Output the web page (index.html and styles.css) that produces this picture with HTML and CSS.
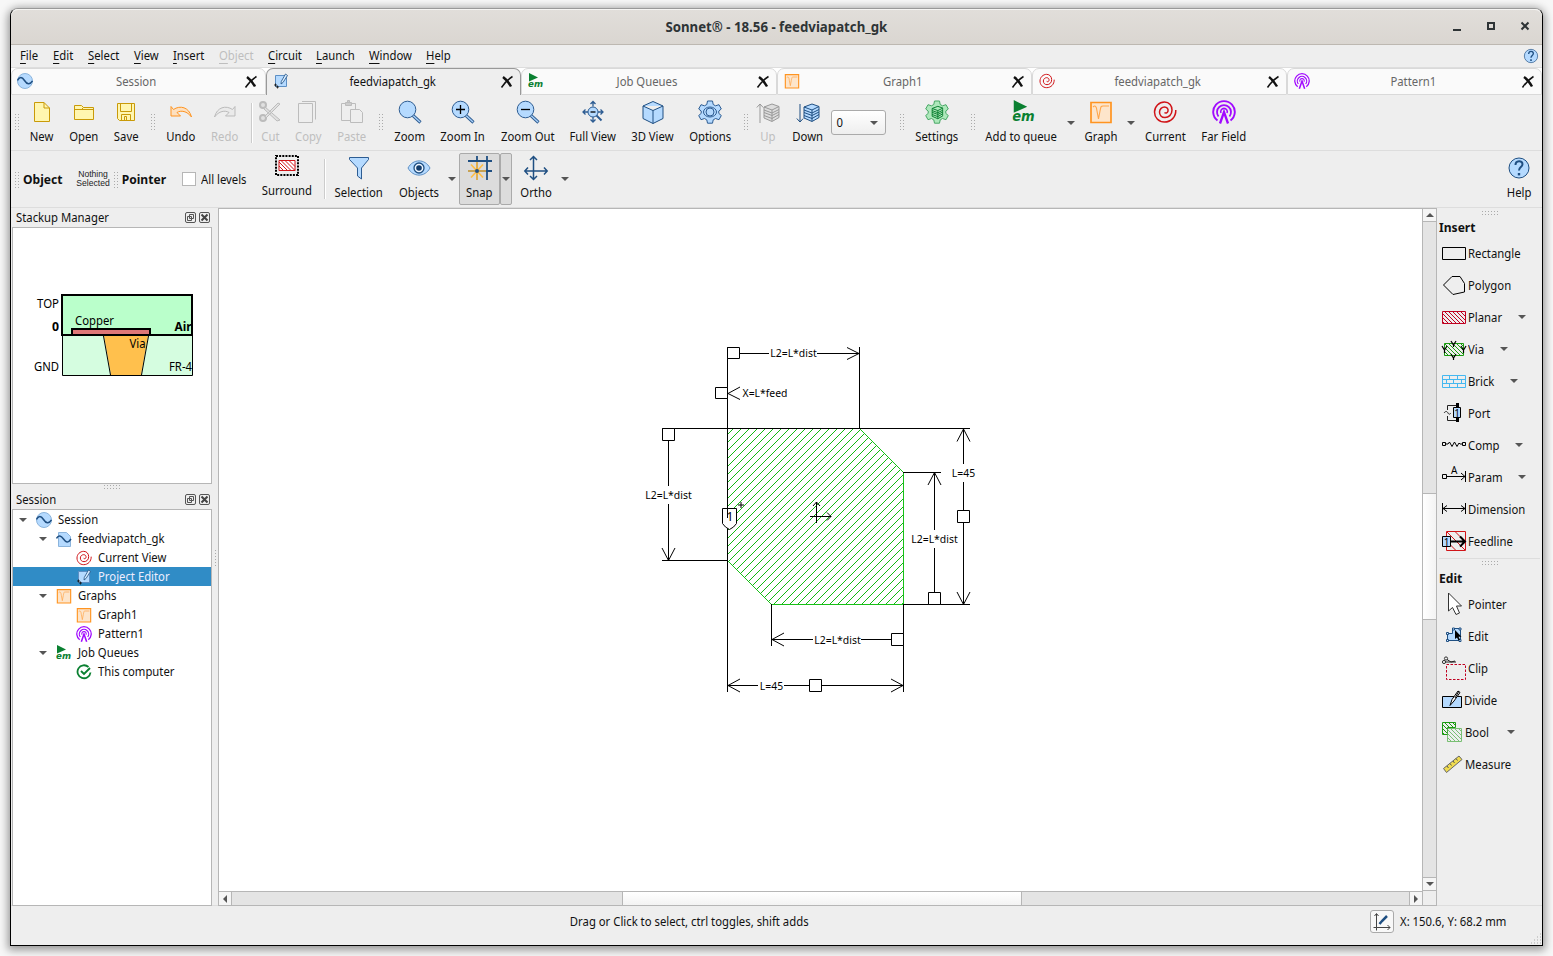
FILE: index.html
```html
<!DOCTYPE html>
<html lang="en">
<head>
<meta charset="utf-8">
<title>Sonnet</title>
<link rel="stylesheet" href="styles.css">
</head>
<body>
<svg class="defs" width="0" height="0">
  <defs>
    <pattern id="hatch" width="8" height="8" patternUnits="userSpaceOnUse"><path d="M1 0h1v1h-1zM0 1h1v1h-1zM7 2h1v1h-1zM6 3h1v1h-1zM5 4h1v1h-1zM4 5h1v1h-1zM3 6h1v1h-1zM2 7h1v1h-1z" fill="#12b812"/></pattern>
    <pattern id="redhatch" width="4" height="4" patternUnits="userSpaceOnUse"><path d="M0 0h1v1h-1zM1 1h1v1h-1zM2 2h1v1h-1zM3 3h1v1h-1z" fill="#c00020"/></pattern>
    <pattern id="greenhatch" width="4" height="4" patternUnits="userSpaceOnUse"><path d="M0 0h1v1h-1zM1 1h1v1h-1zM2 2h1v1h-1zM3 3h1v1h-1z" fill="#1a9a10"/></pattern>
    <symbol id="wave" viewBox="0 0 16 16"><circle cx="8" cy="8" r="7.500" fill="#b5daff" stroke="#8bb4dc"/><path d="M.5 7.500C2.500 3.500 5 3.500 7.500 7.500S13 12 15.500 8" fill="none" stroke="#1f4f82" stroke-width="1.500"/></symbol>
    <symbol id="wavefile" viewBox="0 0 16 16"><path d="M2.500 1.500h8l4 4v10h-12z" fill="#b5daff" stroke="#8bb4dc"/><path d="M.5 7.500C2.500 3.500 5 4.500 7.500 8S12 12.500 15 8" fill="none" stroke="#1f4f82" stroke-width="1.500"/></symbol>
    <symbol id="editor" viewBox="0 0 16 16"><path d="M2.500 2.500h11v11h-11z" fill="#b5daff" stroke="#5d8fc4"/><path d="M12.500 1l2 1.500-4.500 7-2 1.500.3-2.600z" fill="#d8ecff" stroke="#1f4f82" stroke-width=".8"/><path d="M1 12h3M2.500 10.500v3M3 14h3M4.500 12.500v3" stroke="#111" stroke-width=".8"/></symbol>
    <symbol id="em" viewBox="0 0 16 16"><path d="M1 0l9 4.500-9 4z" fill="#0a8031"/><text x="0" y="14" class="em-text" textLength="15" lengthAdjust="spacingAndGlyphs">em</text></symbol>
    <symbol id="graph" viewBox="0 0 24 24"><path d="M2 2.500h20v20H2z" fill="#fde5cb" stroke="#ff9420" stroke-width="1.700"/><path d="M4 7c2-2 3.500-1 4 4l1.500 8L11 11c1-5 1-5 3-5h6" fill="none" stroke="#ffa64a" stroke-width="1.100"/></symbol>
    <symbol id="spiral" viewBox="0 0 24 24"><path d="M22.800 10C23 17 18 22 11.500 22 5.500 22 1.500 17.500 1.500 12S6 2 11.500 2c5 0 7.500 4 7.500 8 0 5-3.500 7.500-7 7.500-3.500 0-5.500-2.500-5.500-5.500S9 7 11.500 7c2.500 0 4 2 3.500 4.200-.5 2-2.500 2.300-3.500 1.300" fill="none" stroke="#d01418" stroke-width="1.500"/></symbol>
    <symbol id="pattern" viewBox="0 0 24 24"><g fill="none" stroke="#a10aff"><path d="M5.500 20.500A10.800 10.800 0 1 1 18.500 20.500" stroke-width="1.900"/><path d="M6.500 16.500A7 7 0 1 1 17.500 16.500" stroke-width="1.800"/><path d="M9 13a3.300 3.300 0 1 1 6 0" stroke-width="1.600"/><path d="M8 23.500L12 12l4 11.500" stroke-width="2.300"/></g></symbol>
    <symbol id="check" viewBox="0 0 16 16"><path d="M12.500 3A6.500 6.500 0 1 0 14.500 8.500" fill="none" stroke="#0a8031" stroke-width="1.800"/><path d="M5 7l3 3 6-6" fill="none" stroke="#0a8031" stroke-width="1.900"/></symbol>
    <symbol id="close" viewBox="0 0 14 14"><path d="M3 2c3.500 2.500 6 6 8 9.500" stroke="#111" stroke-width="2.500" fill="none"/><path d="M12.500 1.500C8.500 4 4.500 8 1.500 12.500" stroke="#111" stroke-width="1.500" fill="none"/></symbol>
    <symbol id="help" viewBox="0 0 24 24"><circle cx="12" cy="12" r="10" fill="#b5daff" stroke="#1f4f82"/><path d="M8.500 9c0-5 7-5 7-.8 0 3-3.500 2.800-3.500 6.300" fill="none" stroke="#1f4f82" stroke-width="2"/><path d="M10.800 17h2.400v2.400h-2.400z" fill="#1f4f82"/></symbol>
    <symbol id="lens" viewBox="0 0 24 24"><path d="M15 15.500l7.500 7" stroke="#2d5c92" stroke-width="3.200"/><path d="M15 15.500l7 6.500" stroke="#a9d0f8" stroke-width="1.400"/><circle cx="9.500" cy="9.500" r="8.300" fill="#b5daff" stroke="#2d5c92"/></symbol>
    <symbol id="layers" viewBox="0 0 24 24"><path d="M8 7l8-3 7 2.500v11l-7 4-8-3.500z"/><path d="M8 7l8 3 7-3.500M16 10v11M8 10l8 3 7-3.500M8 12.500l8 3 7-3.500M8 15.500l8 3 7-4" fill="none"/></symbol>
    <symbol id="arrow" viewBox="0 0 8 4"><path d="M0 0h8L4 4z" fill="#555"/></symbol>
    <symbol id="gear" viewBox="0 0 24 24"><path d="M9.500 1h5l.7 3.500 2.300 1.300L21 4.700 23.300 9l-2.500 2v2.400l2.500 2.100-2.300 4.200-3.500-1.200-2.300 1.400-.7 3.300h-5l-.7-3.300-2.300-1.400L3 19.700.7 15.500l2.500-2.100V11L.7 9 3 4.700l3.500 1.100 2.300-1.300z"/></symbol>
    <symbol id="float" viewBox="0 0 11 11"><rect x=".5" y=".5" width="10" height="10" rx="1.500" fill="none" stroke="#555"/><path d="M4.500 2.500h4v4h-4zM2.500 4.500h4v4h-4z" fill="#eee" stroke="#555"/></symbol>
    <symbol id="shut" viewBox="0 0 11 11"><rect x=".5" y=".5" width="10" height="10" rx="1.500" fill="none" stroke="#555"/><path d="M2.500 2.500l6 6M8.500 2.500l-6 6" stroke="#444" stroke-width="2"/></symbol>
  </defs>
</svg>
<div class="window">
  <header class="titlebar">
    <span></span><h1><span class="t">Sonnet® - 18.56 - feedviapatch_gk</span></h1>
    <svg class="winbuttons" width="80" height="16" viewBox="0 0 80 16"><path d="M4 11h8" stroke="#2e3436" stroke-width="2"/><path d="M39 4h6v6h-6z" fill="none" stroke="#2e3436" stroke-width="2"/><path d="M72.500 3.500l7 7M79.500 3.500l-7 7" stroke="#2e3436" stroke-width="2"/></svg>
  </header>
  <nav class="menubar">
    <span class="t"><u>F</u>ile</span><span class="t"><u>E</u>dit</span><span class="t"><u>S</u>elect</span><span class="t"><u>V</u>iew</span><span class="t"><u>I</u>nsert</span><span class="t off"><u>O</u>bject</span><span class="t"><u>C</u>ircuit</span><span class="t"><u>L</u>aunch</span><span class="t"><u>W</u>indow</span><span class="t"><u>H</u>elp</span>
    <svg width="16" height="16"><use href="#help"/></svg>
  </nav>
  <div class="tabs">
    <div class="tab"><svg width="16" height="16"><use href="#wave"/></svg><span class="t">Session</span><svg width="14" height="14"><use href="#close"/></svg></div>
    <div class="tab active"><svg width="16" height="16"><use href="#editor"/></svg><span class="t">feedviapatch_gk</span><svg width="14" height="14"><use href="#close"/></svg></div>
    <div class="tab"><svg width="16" height="16"><use href="#em"/></svg><span class="t">Job Queues</span><svg width="14" height="14"><use href="#close"/></svg></div>
    <div class="tab"><svg width="16" height="16"><use href="#graph"/></svg><span class="t">Graph1</span><svg width="14" height="14"><use href="#close"/></svg></div>
    <div class="tab"><svg width="16" height="16"><use href="#spiral"/></svg><span class="t">feedviapatch_gk</span><svg width="14" height="14"><use href="#close"/></svg></div>
    <div class="tab"><svg width="16" height="16"><use href="#pattern"/></svg><span class="t">Pattern1</span><svg width="14" height="14"><use href="#close"/></svg></div>
  </div>
  <div class="toolbar main">
    <i class="grip"></i>
    <div class="tool"><svg viewBox="0 0 24 24"><path d="M4.500 2.500H14l5.500 5.500v13.500h-15z" fill="#fff6b0" stroke="#c99a08"/><path d="M14 2.500V8h5.500" fill="none" stroke="#c99a08"/></svg><span class="t">New</span></div>
    <div class="tool"><svg viewBox="0 0 24 24"><path d="M2.500 19.500v-14h7l2 2h10v12z" fill="#fff6b0" stroke="#c99a08"/><path d="M2.500 9.500h7l2-2" fill="none" stroke="#c99a08"/><path d="M9 9.500h12.500" stroke="#c99a08"/></svg><span class="t">Open</span></div>
    <div class="tool"><svg viewBox="0 0 24 24"><path d="M3.500 3.500h17v17h-15l-2-2z" fill="#fff6b0" stroke="#c99a08"/><path d="M6.500 3.500v8h11v-8M7.500 20.500v-6h9v6M10.500 20.500v-4h2v4" fill="none" stroke="#c99a08"/></svg><span class="t">Save</span></div>
    <i class="grip"></i>
    <div class="tool"><svg viewBox="0 0 24 24"><path d="M2 6.500l2.500 3C11 5 20 7 22.500 17 18 11 12 10 8 12.500l3.500 3.500H2z" fill="#fde0c0" stroke="#ff9420"/></svg><span class="t">Undo</span></div>
    <div class="tool off"><svg viewBox="0 0 24 24"><path d="M22 6.500l-2.500 3C13 5 4 7 1.500 17 6 11 12 10 16 12.500L12.500 16H22z" fill="#eaeaea" stroke="#bbb"/></svg><span class="t">Redo</span></div>
    <i class="sep"></i>
    <div class="tool off"><svg viewBox="0 0 24 24" fill="#e0e0e0" stroke="#bcbcbc"><circle cx="5" cy="5" r="3" stroke-width="2"/><circle cx="5" cy="18" r="3" stroke-width="2"/><path d="M7 7l15 13-3 1L6 9zM7 16L20 3l2 1L8 18z"/></svg><span class="t">Cut</span></div>
    <div class="tool off"><svg viewBox="0 0 24 24" fill="none" stroke="#bcbcbc"><path d="M2.500 3.500h14v19h-14z"/><path d="M6 1.500h13.500v18"/></svg><span class="t">Copy</span></div>
    <div class="tool off"><svg viewBox="0 0 24 24" fill="#eee" stroke="#bcbcbc"><path d="M1.500 3.500h14v17h-14z"/><path d="M5.500 2.500h6v3h-6zM7.500.5h2v2h-2z" fill="#ccc"/><path d="M10.500 9.500h9l3 3v10h-12z"/></svg><span class="t">Paste</span></div>
    <i class="grip"></i>
    <div class="tool"><svg viewBox="0 0 24 24"><use href="#lens"/></svg><span class="t">Zoom</span></div>
    <div class="tool"><svg viewBox="0 0 24 24"><use href="#lens"/><path d="M5 9.500h9M9.500 5v9" stroke="#000" stroke-width="1.300"/></svg><span class="t">Zoom In</span></div>
    <div class="tool"><svg viewBox="0 0 24 24"><use href="#lens"/><path d="M5 9.500h9" stroke="#000" stroke-width="1.300"/></svg><span class="t">Zoom Out</span></div>
    <div class="tool"><svg viewBox="0 0 24 24"><g fill="none" stroke="#2d5c92" stroke-width="1.300"><path d="M12 1.500v5M12 17v5M2 12h5M17 12h5M9.500 4L12 1.500 14.500 4M9.500 19.500L12 22l2.500-2.500M4.500 9.500L2 12l2.500 2.500M19.500 9.500L22 12l-2.500 2.500"/><path d="M15 15l5.500 5.500" stroke-width="2"/></g><circle cx="12" cy="12" r="5" fill="#b5daff" stroke="#2d5c92"/><path d="M9.500 12h5" stroke="#000" stroke-width="1.300"/></svg><span class="t">Full View</span></div>
    <div class="tool"><svg viewBox="0 0 24 24"><path d="M12 1.500L22 6v12.500l-10 5-10-5V6z M2 6l10 4.500L22 6M12 10.500v13" fill="#b5daff" stroke="#1f4f82"/></svg><span class="t">3D View</span></div>
    <div class="tool"><svg viewBox="0 0 24 24" fill="#b5daff" stroke="#2d5c92"><use href="#gear"/><ellipse cx="12" cy="12" rx="6.500" ry="5"/><circle cx="12" cy="12" r="4"/></svg><span class="t">Options</span></div>
    <i class="grip"></i>
    <div class="tool off"><svg viewBox="0 0 24 24" fill="#ddd" stroke="#999"><use href="#layers"/><path d="M4 23V4M.8 7.500L4 4l3.200 3.500" fill="none"/></svg><span class="t">Up</span></div>
    <div class="tool"><svg viewBox="0 0 24 24" fill="#b5daff" stroke="#1f4f82"><use href="#layers"/><path d="M4 4v18M.8 18.500L4 22l3.200-3.500" fill="none"/></svg><span class="t">Down</span></div>
    <div class="combo"><span class="t">0</span><svg width="8" height="4"><use href="#arrow"/></svg></div>
    <i class="grip"></i>
    <div class="tool"><svg viewBox="0 0 24 24" fill="#aee8bb" stroke="#0a8031"><use href="#gear" stroke="#49a866"/><use href="#layers" x="1.500" y="3.500" width="17" height="17" stroke-width="1.400"/></svg><span class="t">Settings</span></div>
    <i class="grip"></i>
    <div class="tool"><svg viewBox="-1.500 0 16 16"><use href="#em" width="16" height="16"/></svg><span class="t">Add to queue</span></div>
    <svg class="drop" width="8" height="4"><use href="#arrow"/></svg>
    <div class="tool"><svg viewBox="0 0 24 24"><use href="#graph"/></svg><span class="t">Graph</span></div>
    <svg class="drop" width="8" height="4"><use href="#arrow"/></svg>
    <div class="tool"><svg viewBox="0 0 24 24"><use href="#spiral"/></svg><span class="t">Current</span></div>
    <div class="tool"><svg viewBox="0 0 24 24"><use href="#pattern"/></svg><span class="t">Far Field</span></div>
  </div>
  <div class="toolbar pointer">
    <i class="grip"></i><b class="t">Object</b><small>Nothing<br>Selected</small><i class="grip"></i><b class="t">Pointer</b>
    <label><i class="checkbox"></i><span class="t">All levels</span></label>
    <div class="tool surround"><svg viewBox="0 0 24 24"><path d="M1 2h22v19H1z" fill="none" stroke="#000" stroke-width="2" stroke-dasharray="2 1.150"/><path d="M4 6.500h16v10H4z" fill="#fff"/><path d="M4 6.500h16v10H4zM4 8l8.500 8.500M6 6.500l10 10M10 6.500l10 10M14 6.500l6 6M4 12l4.500 4.500" fill="none" stroke="#d01418"/></svg><span class="t">Surround</span></div>
    <i class="sep"></i>
    <div class="tool"><svg viewBox="0 0 24 24"><path d="M2.500 1.500h19v2L14.500 12v11l-4-3v-8l-8-8.500z" fill="#b5daff" stroke="#2d5c92"/></svg><span class="t">Selection</span></div>
    <div class="tool"><svg viewBox="0 0 24 24"><path d="M1 12C6 2.500 18 2.500 23 12 18 21.500 6 21.500 1 12z" fill="#b5daff" stroke="#5d8fc4"/><circle cx="12" cy="12" r="5" fill="#eef6ff" stroke="#1f4f82" stroke-width="1.300"/><circle cx="12" cy="12" r="2.800" fill="#123c6c"/></svg><span class="t">Objects</span></div>
    <svg class="drop snug" width="8" height="4"><use href="#arrow"/></svg>
    <div class="tool pressed"><svg viewBox="0 0 24 24"><path d="M0 5h24M0 15h24M9 0v24M19 0v24" stroke="#1f4f82" stroke-width="1.800"/><path d="M9 6v18M0 15h18M3 8.500l12 13M15 8.500l-12 13" stroke="#ffbe45" stroke-width="1.700"/><circle cx="9" cy="15" r="2" fill="#1f4f82"/></svg><span class="t">Snap</span></div>
    <div class="pressed arrowcell"><svg width="8" height="4"><use href="#arrow"/></svg></div>
    <div class="tool"><svg viewBox="0 0 24 24"><path d="M9.500 1v22M1 15h22M6 4l3.500-3.500L13 4M6 20l3.500 3.500L13 20M4 11.500L.8 15 4 18.500M20 11.500l3.200 3.500-3.200 3.500" fill="none" stroke="#1f4f82" stroke-width="1.500"/></svg><span class="t">Ortho</span></div>
    <svg class="drop" width="8" height="4"><use href="#arrow"/></svg>
    <div class="tool helptool"><svg viewBox="0 0 24 24"><use href="#help"/></svg><span class="t">Help</span></div>
  </div>
  <main class="work">
    <aside class="left">
      <div class="paneltitle"><span class="t">Stackup Manager</span><svg width="11" height="11"><use href="#float"/></svg><svg width="11" height="11"><use href="#shut"/></svg></div>
      <div class="panel stack">
        <svg class="stackup" width="197" height="255" viewBox="13 228 197 255">
          <path d="M62.500 335h130v40.500h-130z" fill="#d5fde0" stroke="#000"/>
          <path d="M62 295h130v40h-130z" fill="#baffcb" stroke="#000" stroke-width="2"/>
          <path d="M104 336h44l-7 39h-30z" fill="#ffc04d"/><path d="M103.500 336l7 39M148.500 336l-7 39" stroke="#000"/>
          <path d="M72 329h78v6H72z" fill="#de7777" stroke="#000" stroke-width="2"/>
          <g class="layertext"><text x="37" y="308" textLength="22" lengthAdjust="spacingAndGlyphs">TOP</text><text x="34" y="371" textLength="25" lengthAdjust="spacingAndGlyphs">GND</text><text x="75" y="325" textLength="39" lengthAdjust="spacingAndGlyphs">Copper</text><text x="129.500" y="348" textLength="16" lengthAdjust="spacingAndGlyphs">Via</text><text x="169" y="371" textLength="23" lengthAdjust="spacingAndGlyphs">FR-4</text><text class="bold" x="52" y="331" textLength="7" lengthAdjust="spacingAndGlyphs">0</text><text class="bold" x="174.500" y="331" textLength="17" lengthAdjust="spacingAndGlyphs">Air</text></g>
        </svg>
      </div>
      <div class="splitdots"></div>
      <div class="paneltitle second"><span class="t">Session</span><svg width="11" height="11"><use href="#float"/></svg><svg width="11" height="11"><use href="#shut"/></svg></div>
      <div class="panel tree">
        <div class="row"><svg class="drop" width="8" height="4"><use href="#arrow"/></svg><svg width="16" height="16"><use href="#wave"/></svg><span class="t">Session</span></div>
        <div class="row l2"><svg class="drop" width="8" height="4"><use href="#arrow"/></svg><svg width="16" height="16"><use href="#wavefile"/></svg><span class="t">feedviapatch_gk</span></div>
        <div class="row l3"><svg width="16" height="16"><use href="#spiral"/></svg><span class="t">Current View</span></div>
        <div class="row l3 selected"><svg width="16" height="16"><use href="#editor"/></svg><span class="t">Project Editor</span></div>
        <div class="row l2"><svg class="drop" width="8" height="4"><use href="#arrow"/></svg><svg width="16" height="16"><use href="#graph"/></svg><span class="t">Graphs</span></div>
        <div class="row l3"><svg width="16" height="16"><use href="#graph"/></svg><span class="t">Graph1</span></div>
        <div class="row l3"><svg width="16" height="16"><use href="#pattern"/></svg><span class="t">Pattern1</span></div>
        <div class="row l2"><svg class="drop" width="8" height="4"><use href="#arrow"/></svg><svg width="16" height="16"><use href="#em"/></svg><span class="t">Job Queues</span></div>
        <div class="row l3"><svg width="16" height="16"><use href="#check"/></svg><span class="t">This computer</span></div>
      </div>
    </aside>
    <div class="splitter"></div>
    <section class="canvas">
      <svg class="drawing" width="1203" height="682" viewBox="219 209 1203 682">
        <path d="M727.500 428.500H859.500L903.500 472.500V604.500H771.500L727.500 560.500z" fill="url(#hatch)" stroke="#18c018"/>
        <g class="wire">
          <path d="M727.500 347V692M859.500 347V428M662 428.500H970M662 560.500H727M903 472.500H941M903 604.500H970M903.500 604V692M771.500 604V646"/>
          <path d="M739 353.500H769M817 353.500H859M668.500 440V486M668.500 504V560M963.500 429V464M963.500 482V510M963.500 523V604M934.500 473V530M934.500 548V592M771 639.500H813M861 639.500H891M727 685.500H758M784 685.500H809M822 685.500H903"/>
          <path d="M847 347.500l12 6-12 6M740 387l-12 6.500 12 6M662 548l6.500 12.500 6.500-12.500M957 441.500l6.500-12.500 6.500 12.500M957 592l6.500 12.500L970 592M928 485l6.500-12.500L941 485M784 633l-12 6.500 12 6.500M740 679l-12 6.500 12 6.500M891 679l12 6.500-12 6.500"/>
          <path class="box" d="M727.500 347.500h12v11h-12zM715.500 387.500h12v11h-12zM662.500 428.500h12v12h-12zM957.500 510.500h12v12h-12zM928.500 592.500h12v12h-12zM891.500 633.500h12v12h-12zM809.500 679.500h12v12h-12z"/>
          <path class="box" d="M722.500 508.500h14v15l-3 3.500-4 2.500-4-2.500-3-3.500z"/>
          <path d="M727.500 508V518M738 505h6M741 502v6M816.500 502v21M810 516.500h21M813 506l3.500-4 3.500 4M827 512.500l4 4-4 4"/>
        </g>
        <g class="dimtext"><text x="793.500" y="357">L2=L*dist</text><text x="765" y="397">X=L*feed</text><text x="668.500" y="499">L2=L*dist</text><text x="963.500" y="477">L=45</text><text x="934.500" y="543">L2=L*dist</text><text x="837.500" y="644">L2=L*dist</text><text x="771.500" y="690">L=45</text><text x="730" y="521" class="portno">1</text></g>
      </svg>
      <div class="vscroll"><i><svg viewBox="0 0 8 4"><path d="M0 4h8L4 0z" fill="#555"/></svg></i><b></b><i><svg viewBox="0 0 8 4"><use href="#arrow"/></svg></i></div>
      <div class="hscroll"><i><svg viewBox="0 0 4 8"><path d="M4 0v8L0 4z" fill="#555"/></svg></i><b></b><i><svg viewBox="0 0 4 8"><path d="M0 0v8l4-4z" fill="#555"/></svg></i></div>
      <div class="corner"></div>
    </section>
    <aside class="right">
      <i class="hgrip"></i>
      <h2><span class="t">Insert</span></h2>
      <div class="item"><svg viewBox="0 0 24 24"><path d="M.5 6.500h23v12H.5z" fill="none" stroke="#000"/></svg><span class="t">Rectangle</span></div>
      <div class="item"><svg viewBox="0 0 24 24"><path d="M1.500 12L10 3.500h8l4.500 7V19L11 21.500z" fill="none" stroke="#000"/></svg><span class="t">Polygon</span></div>
      <div class="item"><svg viewBox="0 0 24 24"><path d="M.5 6.500h23v12H.5z" fill="url(#redhatch)" stroke="#c00020"/></svg><span class="t">Planar</span><svg class="drop d53"><use href="#arrow"/></svg></div>
      <div class="item"><svg viewBox="0 0 24 24"><path d="M2.500 6.500h19v12h-19z" fill="url(#greenhatch)" stroke="#1a9a10"/><path d="M9 4l2.500 4L14 4M9 17l2.500 4 2.500-4M11.500 8v2M11.500 21v2M0 9l2.500 4L5 9M19 9l2.500 4L24 9M2.500 13v3M21.500 13v3" fill="none" stroke="#000" stroke-width="1.200"/></svg><span class="t">Via</span><svg class="drop d35"><use href="#arrow"/></svg></div>
      <div class="item"><svg viewBox="0 0 24 24"><path d="M.5 6.500h23v12H.5zM.5 10.500h23M.5 14.500h23M7.500 6.500v4M15.500 6.500v4M11.500 10.500v4M19.500 10.500v4M4.500 10.500v4M7.500 14.500v4M15.500 14.500v4" fill="none" stroke="#45b8f0"/></svg><span class="t">Brick</span><svg class="drop d45"><use href="#arrow"/></svg></div>
      <div class="item"><svg viewBox="0 0 24 24"><path d="M5.500 9V4.500H14M5.500 15v4.500H14M2 12c1.500-2 3-2 4 0s2 1 3 0" fill="none" stroke="#222"/><path d="M15.500 2v19" stroke="#000" stroke-width="3"/><path d="M11.500 6.500h7v10h-7z" fill="#b5daff" stroke="#000"/><text x="12.300" y="15.500" class="num">1</text></svg><span class="t">Port</span></div>
      <div class="item"><svg viewBox="0 0 24 24"><path d="M.5 9.500h3v3h-3zM20.500 9.500h3v3h-3zM3.500 11H6l1.500-2 2.500 4.500L12.500 9l2.500 4.500L17 10l1 1h2.500" fill="none" stroke="#000"/></svg><span class="t">Comp</span><svg class="drop d50"><use href="#arrow"/></svg></div>
      <div class="item"><svg viewBox="0 0 24 24"><path d="M.5 9.500h4v4h-4zM4.500 11.500h19M23.500 6v11M19 8l4 3.500-4 3.500" fill="none" stroke="#000"/><text x="9" y="8.500" class="num">A</text></svg><span class="t">Param</span><svg class="drop d53"><use href="#arrow"/></svg></div>
      <div class="item"><svg viewBox="0 0 24 24"><path d="M.5 6v11M23.500 6v11M.5 11.500h23M5 8.500l-4 3 4 3M19 8.500l4 3-4 3" fill="none" stroke="#000"/></svg><span class="t">Dimension</span></div>
      <div class="item"><svg viewBox="0 0 24 24"><path d="M4.500 2.500h19v19h-19zM5 3l18 18M13 2.500l10.500 10.500M4.500 12l9.500 9.500" fill="none" stroke="#d01418"/><path d="M8 12.500h14M18 7.500l5 5-5 5" fill="none" stroke="#000" stroke-width="2"/><path d="M.5 7.500h8v10h-8z" fill="#b5daff" stroke="#000"/><text x="1.700" y="16.500" class="num">1</text></svg><span class="t">Feedline</span></div>
      <div class="divider"><i class="hgrip"></i></div>
      <h2><span class="t">Edit</span></h2>
      <div class="item"><svg viewBox="0 0 24 24"><path d="M6.500 1v18l4-3.500 3.500 7 3.500-1.500-3-7h5z" fill="#fff" stroke="#333"/></svg><span class="t">Pointer</span></div>
      <div class="item"><svg viewBox="0 0 24 24"><path d="M5.500 9.500h5v-5h8v12h-13z" fill="#b5daff" stroke="#1f4f82"/><path d="M4.500 8.500h2v2h-2zM10.500 4h2v2h-2zM17 4h2v2h-2zM4.500 15.500h2v2h-2zM17 15.500h2v2h-2z" fill="#d8ecff" stroke="#1f4f82"/><path d="M13 6v9l2-1.500 1.500 3 1.500-.7-1.500-3h3z"/></svg><span class="t">Edit</span></div>
      <div class="item"><svg viewBox="0 0 24 24"><path d="M4.500 8.500h19v15h-19z" fill="none" stroke="#c00020" stroke-dasharray="2.500 1.500"/><circle cx="4" cy="2.500" r="1.600" fill="none" stroke="#333"/><circle cx="2" cy="6" r="1.600" fill="none" stroke="#333"/><path d="M5 3.500L9 6h5M3.500 6H9l4-1" stroke="#222" fill="none"/></svg><span class="t">Clip</span></div>
      <div class="item narrow"><svg viewBox="0 0 24 24"><path d="M.5 8.500h19v11H.5z" fill="#b5daff" stroke="#000"/><path d="M8 17.500l2-6 6-8.500 2 1.500-6 8.500zM13 10l4-7" fill="#fff" stroke="#000"/></svg><span class="t">Divide</span></div>
      <div class="item bool"><svg viewBox="0 0 24 24"><path d="M.5 2.500h13v5h-8v7h-5z" fill="url(#greenhatch)" stroke="#1a9a10"/><path d="M5.500 8.500h14v13h-14z" fill="#eee"/><path d="M5.500 8.500h14v13h-14z" fill="url(#greenhatch)" stroke="#1a9a10" opacity=".55"/></svg><span class="t">Bool</span><svg class="drop d41"><use href="#arrow"/></svg></div>
      <div class="item bool"><svg viewBox="0 0 24 24"><path d="M1.500 16.500L17 4l3 3.500L4.500 20.500z" fill="#f0dc50" stroke="#666"/><path d="M5 14l1.500 2M8 11.500l1.500 2M11 9l1.500 2M14 6.500l1.500 2" stroke="#555"/></svg><span class="t">Measure</span></div>
    </aside>
  </main>
  <footer class="status">
    <span class="message t">Drag or Click to select, ctrl toggles, shift adds</span>
    <div class="coordbutton"><svg width="18" height="18" viewBox="0 0 18 18"><path d="M3.500 1v13.500H17M1.500 3l2-2.500L5.500 3M.5 14.500h3v3M14.500 12l2.500 2.500-2.500 2.500" fill="none" stroke="#444"/><path d="M6.500 11l2.500-3 5-5" stroke="#1f4f82" stroke-width="2.500"/></svg></div>
    <span class="coords t">X: 150.6, Y: 68.2 mm</span>
    <svg class="sizegrip" width="12" height="12"><path d="M10 1h1M7 4h1M10 4h1M4 7h1M7 7h1M10 7h1M1 10h1M4 10h1M7 10h1M10 10h1" stroke="#aaa"/></svg>
  </footer>
</div>
</body>
</html>
```
FILE: styles.css
```css
* { box-sizing: border-box; }
body { margin: 0; height: 956px; padding: 8px 10px 10px; background: #f7f7f7; overflow: hidden; font: 13px/16px "Noto Sans", sans-serif; color: #111; }
.defs { position: absolute; }
svg { display: block; flex: none; overflow: visible; }
.t { display: inline-block; white-space: nowrap; transform: translateY(var(--lift, 0)) scaleX(.87); }
.off { color: #bebebe; }
.window { height: 938px; width: 1533px; display: flex; flex-direction: column; background: #eee; border: 1px solid #000; border-top-color: #999; border-radius: 8px 8px 0 0; box-shadow: 0 2px 9px 2px rgba(0,0,0,.4); }
.titlebar { height: 36px; flex: none; display: grid; grid-template-columns: 1fr auto 1fr; align-items: center; background: linear-gradient(#e1deda, #dad6d1); border-bottom: 1px solid #bdb8b1; border-radius: 7px 7px 0 0; box-shadow: inset 0 1px #f5f4f2; }
.titlebar h1 { margin: 0; font-size: 14px; font-weight: bold; color: #2e3436; }
.titlebar .t { transform: scaleX(.945); }
.winbuttons { justify-self: end; margin-right: 13px; }
.menubar, .tabs, .paneltitle, .tree, .status { --lift: -1px; }
.menubar { height: 23px; flex: none; display: grid; grid-template-columns: 33px 35px 46px 39px 46px 49px 48px 53px 57px 1fr 16px; align-items: center; padding: 0 3px 0 9px; border-bottom: 1px solid #ddd; }
.menubar .t { justify-self: start; transform-origin: left; }
.menubar u { text-underline-offset: 3px; }
.tabs { height: 27px; flex: none; display: grid; grid-template-columns: repeat(6, 1fr); background: #fff; }
.tab { display: grid; grid-template-columns: 16px 1fr 14px; align-items: center; padding: 0 6px 0 6px; background: #fafafa; border: 1px solid #d9d9d9; border-radius: 7px 7px 0 0; color: #666; }
.tab:first-child { padding: 0 7px 0 5px; }
.tab svg:first-child { margin-top: -2px; }
.tab .t { justify-self: center; margin-right: 5px; }
.tab.active { background: #eee; border-color: #999; border-bottom: 0; color: #111; }
.toolbar { display: grid; flex: none; align-items: start; border-bottom: 1px solid #ddd; }
.main { height: 56px; grid-template-columns: 11px 39px 45px 40px 14px 41px 48px 5px 32px 44px 44px 14px 43px 64px 65px 65px 55px 60px 12px 32px 47px 64px 14px 56px 16px 81px 18px 42px 18px 50px 67px; }
.pointer { height: 57px; grid-template-columns: 12px 53px 34px 12px 44px 87px 67px 9px 59px 61px 10px 41px 12px 48px 10px 1fr; align-items: center; }
.pointer > b.t { justify-self: center; transform: scaleX(.93); }
.pointer > b.t:nth-of-type(1) { justify-self: start; transform-origin: left; }
.tool { display: flex; flex-direction: column; align-items: center; gap: 4px; padding-top: 5px; height: 100%; width: 100%; }
.tool > svg { width: 24px; height: 24px; }
.surround { padding-top: 3px; }
.helptool { width: 46px; justify-self: end; }
.grip { width: 6px; height: 17px; margin-top: 18px; justify-self: center; background: radial-gradient(circle, #aaa .6px, transparent .8px) 0 0/3px 3px; }
.pointer .grip { margin-top: 0; }
.sep { width: 2px; height: 40px; margin-top: 8px; justify-self: center; border-left: 1px solid #ccc; background: #fff; }
.pointer .sep { margin-top: 0; }
.drop { width: 8px; height: 4px; justify-self: center; }
.snug { justify-self: start; margin-left: -1px; }
.main .drop { margin-top: 26px; }
.combo { width: 55px; height: 25px; margin: 15px 0 0; padding: 0 7px 0 4px; display: flex; align-items: center; justify-content: space-between; border: 1px solid #aaa; border-radius: 3px; background: linear-gradient(#fff, #eee); --lift: -1px; }
small { font: 8.600px/9px "Liberation Sans", sans-serif; text-align: center; justify-self: center; color: #222; }
label { display: flex; align-items: center; gap: 5px; padding-left: 16px; }
label .t { transform-origin: left; }
.checkbox { width: 14px; height: 14px; border: 1px solid #b6b6b6; background: #fff; }
.pressed { height: 52px; background: #dcdcdc; border: 1px solid #aaa; border-radius: 2px; }
.pressed.tool { padding-top: 2px; }
.arrowcell { display: flex; align-items: center; justify-content: center; }
.work { flex: 1; display: grid; grid-template-columns: 201px 6px 1219px 1fr; min-height: 0; border-bottom: 1px solid #ddd; }
.left { display: flex; flex-direction: column; padding: 0 0 0 1px; min-height: 0; }
.splitter { width: 3px; height: 18px; margin: 341px 0 0 2px; background: radial-gradient(circle, #aaa .6px, transparent .8px) 0 0/3px 3px; }
.paneltitle { height: 19px; flex: none; display: flex; align-items: center; gap: 3px; padding: 0 2px 0 4px; }
.paneltitle svg { margin-top: -1px; }
.paneltitle.second { height: 20px; --lift: 0px; }
.paneltitle.second svg { margin-top: 1px; }
.paneltitle .t { flex: 1; transform-origin: left; }
.panel { background: #fff; border: 1px solid #b6b6b6; }
.stack { height: 257px; flex: none; }
.splitdots { height: 5px; flex: none; margin: 0 auto; width: 18px; background: radial-gradient(circle, #aaa .6px, transparent .8px) 0 0/3px 3px; }
.tree { flex: 1; }
.row { height: 19px; display: flex; align-items: center; gap: 6px; padding-left: 6px; }
.row .t { transform-origin: left; }
.row .drop { margin-right: 3px; }
.l2 { padding-left: 26px; }
.l3 { padding-left: 63px; }
.selected { background: #308cc6; color: #eef; }
.layertext text { font: 13px "Noto Sans", sans-serif; }
.layertext .bold { font-weight: bold; }
.canvas { display: grid; grid-template-columns: 1203px 15px; grid-template-rows: 682px 15px; border-left: 1px solid #b6b6b6; border-top: 1px solid #b6b6b6; background: #fff; }
.wire { fill: none; stroke: #000; stroke-width: 1; }
.wire .box { fill: #fff; }
.dimtext text { font: 10.400px "Noto Sans", sans-serif; text-anchor: middle; }
.dimtext .portno { font-size: 12px; }
.vscroll, .hscroll { display: grid; background: #e4e4e4; border: 1px solid #b6b6b6; }
.vscroll { grid-template-rows: 13px 1fr 13px; border-top: 0; }
.vscroll b { height: 127px; margin-top: 271px; border-width: 1px 0; }
.hscroll { grid-template-columns: 13px 1fr 13px; border-left: 0; border-right: 0; }
.hscroll b { width: 400px; margin-left: 390px; border-width: 0 1px; }
.vscroll b, .hscroll b { background: linear-gradient(90deg, #fff, #f3f3f3); border-style: solid; border-color: #b6b6b6; }
.hscroll b { background: linear-gradient(#fff, #f3f3f3); }
.vscroll i, .hscroll i { display: flex; align-items: center; justify-content: center; background: #f5f5f5; }
.vscroll i:first-child { border-bottom: 1px solid #b6b6b6; }
.vscroll i:last-child { border-top: 1px solid #b6b6b6; }
.hscroll i:first-child { border-right: 1px solid #b6b6b6; }
.hscroll i:last-child { border-left: 1px solid #b6b6b6; }
.vscroll svg { width: 8px; height: 4px; }
.hscroll svg { width: 4px; height: 8px; }
.corner { background: #eee; border: 1px solid #b6b6b6; border-top: 0; }
.right { padding: 2px 2px 0; }
.hgrip { display: block; width: 18px; height: 6px; margin: 0 auto; background: radial-gradient(circle, #aaa .6px, transparent .8px) 0 0/3px 3px; }
.right h2 { margin: 3px 0 2px; font-size: 13px; line-height: 16px; }
.right h2 .t { transform: scaleX(.93); transform-origin: left; display: block; }
.item { height: 32px; display: flex; align-items: center; padding-left: 3px; gap: 2px; }
.item .t { transform-origin: left; }
.item > svg:first-child { width: 24px; height: 24px; }
.item.narrow { gap: 0; }
.item.narrow > svg:first-child { margin-right: -2px; }
.item.bool > svg:first-child { margin-right: -3px; }
.item .drop { margin-left: auto; }
.item .d53 { margin-right: 14px; }
.item .d35 { margin-right: 32px; }
.item .d45 { margin-right: 22px; }
.item .d50 { margin-right: 17px; }
.item .d41 { margin-right: 25px; }
.divider { height: 9px; border-top: 1px solid #ddd; margin-top: 1px; padding-top: 1px; }
.num { font: 10px "Noto Sans", sans-serif; }
.em-text { font: italic bold 9px "DejaVu Sans", sans-serif; fill: #0a8031; }
.status { height: 39px; flex: none; display: grid; grid-template-columns: 1356px 24px 1fr 12px; align-items: center; }
.message { justify-self: center; padding-bottom: 8px; }
.coordbutton { width: 24px; height: 23px; margin: 0 0 8px 3px; padding: 2px; border: 1px solid #aaa; border-radius: 3px; background: #f8f8f8; }
.coords { padding: 0 0 8px; margin-left: 9px; justify-self: start; transform-origin: left; }
.sizegrip { align-self: end; }
```
